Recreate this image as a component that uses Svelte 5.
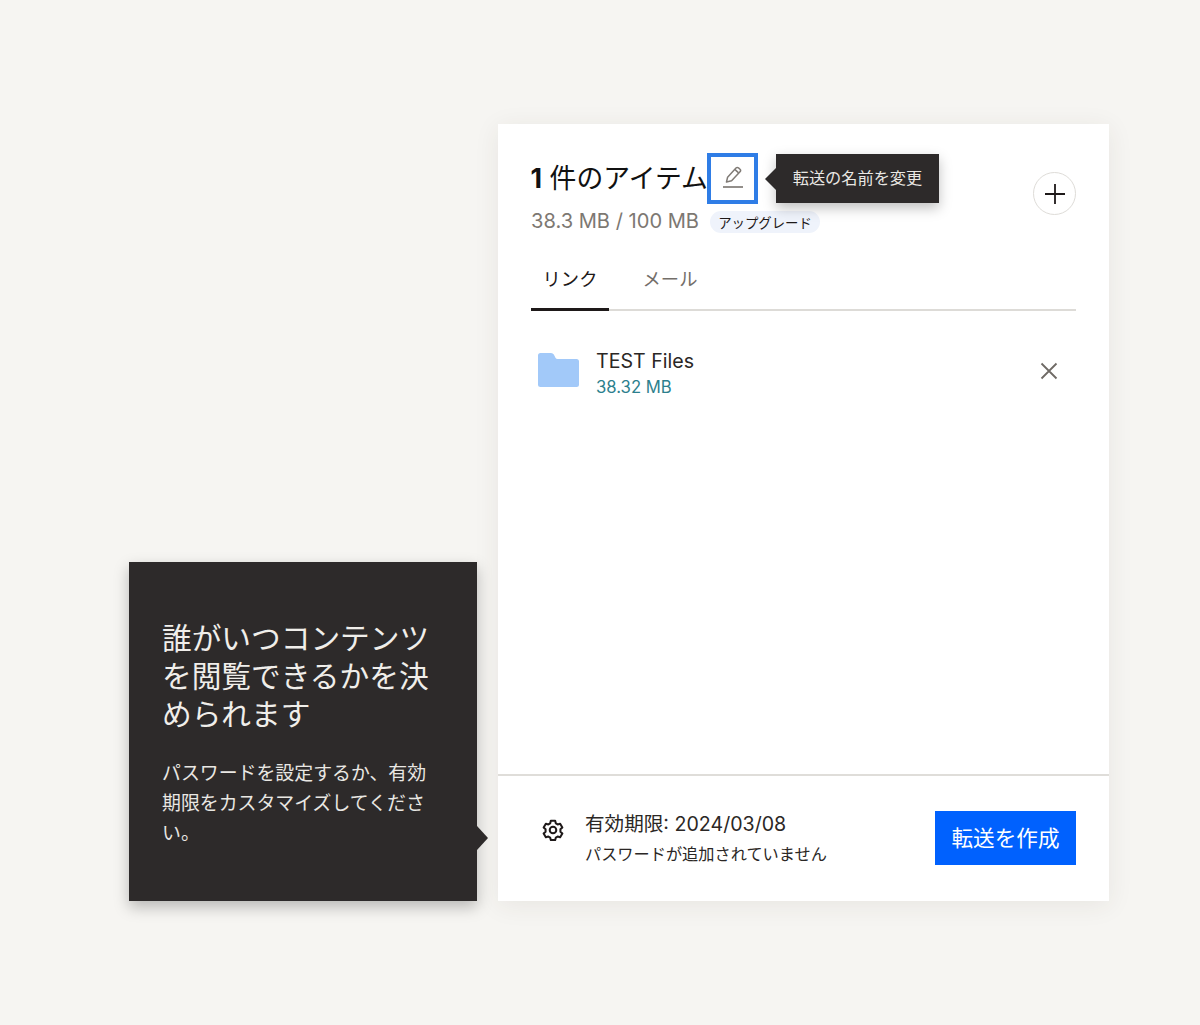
<script>
  const tabs = [
    { label: 'リンク', active: true },
    { label: 'メール', active: false }
  ];
</script>

<div class="stage">
  <aside class="coach">
    <h2>誰がいつコンテンツを閲覧できるかを決められます</h2>
    <p>パスワードを設定するか、有効期限をカスタマイズしてください。</p>
  </aside>

  <section class="card">
    <header class="head">
      <div class="head-main">
        <div class="title-row">
          <h1><b>1</b> 件のアイテム</h1>
          <button class="edit" aria-label="転送の名前を変更">
            <svg width="22" height="24" viewBox="0 0 22 24" fill="none" stroke="#807b76" stroke-width="1.5">
              <path d="M4.5 16 L5.6 11.2 L14 2 Q15.2 .9 16.5 1.9 L18 3.2 Q19.2 4.4 18 5.7 L9.6 14.8 Z" stroke-linejoin="round" />
              <path d="M12.8 3.4 L16.6 6.9" />
              <path d="M1 21 H21" stroke-width="1.7" />
            </svg>
          </button>
          <div class="tip">転送の名前を変更</div>
        </div>
        <div class="quota">
          <span>38.3 MB / 100 MB</span>
          <span class="badge">アップグレード</span>
        </div>
      </div>
      <button class="add" aria-label="追加">
        <svg width="22" height="22" viewBox="0 0 22 22" stroke="#1e1919" stroke-width="1.8"><path d="M11 1 V21 M1 11 H21" /></svg>
      </button>
    </header>

    <nav class="tabs">
      {#each tabs as t}
        <span class="tab" class:active={t.active}>{t.label}</span>
      {/each}
    </nav>

    <div class="file">
      <svg class="folder" width="41" height="34" viewBox="0 0 41 34">
        <path d="M0 2.5 Q0 0 2.5 0 H13 Q15 0 15.8 1.5 L17.6 5 Q18.2 6 19.6 6 H38.5 Q41 6 41 8.5 V31.5 Q41 34 38.5 34 H2.5 Q0 34 0 31.5 Z" fill="#a2c9f9" />
      </svg>
      <div class="file-text">
        <div class="file-name">TEST Files</div>
        <div class="file-size">38.32 MB</div>
      </div>
      <svg class="remove" width="18" height="18" viewBox="0 0 18 18" stroke="#6f6a65" stroke-width="1.8"><path d="M1.5 1.5 L16.5 16.5 M16.5 1.5 L1.5 16.5" /></svg>
    </div>

    <footer class="foot">
      <svg class="gear" width="22" height="22" viewBox="0 0 24 24" fill="none" stroke="#1e1919" stroke-width="2.2" stroke-linejoin="round">
        <path d="M9.6 2.5h4.8l.7 2.8 1.9 1.1 2.8-.8 2.4 4.1-2.1 2v2.6l2.1 2-2.4 4.1-2.8-.8-1.9 1.1-.7 2.8H9.6l-.7-2.8-1.9-1.1-2.8.8-2.4-4.1 2.1-2v-2.6l-2.1-2 2.4-4.1 2.8.8 1.9-1.1z" transform="translate(0 -.5)" />
        <circle cx="12" cy="12" r="3.6" />
      </svg>
      <div class="foot-text">
        <div class="expiry">有効期限: 2024/03/08</div>
        <div class="pass">パスワードが追加されていません</div>
      </div>
      <button class="create">転送を作成</button>
    </footer>
  </section>
</div>

<style>
  :global(body) {
    margin: 0;
    background: #f6f5f2;
  }
  .stage {
    height: 1025px;
    box-sizing: border-box;
    padding: 124px 0 0 129px;
    display: flex;
    align-items: flex-start;
    gap: 21px;
    font-family: Inter, "Noto Sans CJK JP", sans-serif;
    color: #1e1919;
  }
  h1, h2, p { margin: 0; font-weight: 400; }
  button { font-family: inherit; padding: 0; cursor: pointer; }

  .coach {
    position: relative;
    margin-top: 438px;
    width: 348px;
    height: 339px;
    box-sizing: border-box;
    padding: 57px 33px 0;
    background: #2d2a2a;
    color: #f0eeea;
    box-shadow: 0 6px 14px rgba(0, 0, 0, 0.25);
  }
  .coach::after {
    content: "";
    position: absolute;
    right: -11px;
    top: 264px;
    width: 11px;
    height: 24px;
    background: #2d2a2a;
    clip-path: polygon(0 0, 100% 50%, 0 100%);
  }
  .coach h2 {
    font-size: 29.7px;
    line-height: 38px;
    font-weight: 400;
  }
  .coach p {
    margin-top: 26px;
    font-size: 18.9px;
    line-height: 30px;
    font-weight: 400;
    color: #e9e7e3;
  }

  .card {
    width: 611px;
    height: 777px;
    background: #fff;
    display: flex;
    flex-direction: column;
    box-sizing: border-box;
    padding: 0 33px;
    box-shadow: 0 4px 24px rgba(60, 50, 40, 0.08);
  }
  .head {
    display: flex;
    justify-content: space-between;
    padding-top: 29px;
    height: 126px;
    box-sizing: border-box;
  }
  .title-row {
    position: relative;
    display: flex;
    align-items: center;
    height: 50px;
  }
  h1 {
    font-size: 26.8px;
    white-space: nowrap;
    color: #111;
    width: 176px;
    padding-bottom: 4px;
    margin-left: -0.5px;
    margin-right: 0.5px;
  }
  h1 b { font-weight: 700; }
  .edit {
    width: 51px;
    height: 51px;
    box-sizing: border-box;
    border: 4px solid #2f7de6;
    background: #fff;
    display: grid;
    place-items: center;
  }
  .tip {
    position: absolute;
    left: 245px;
    top: 1px;
    width: 163px;
    height: 49px;
    padding-bottom: 3px;
    box-sizing: border-box;
    background: #2d2a2a;
    color: #e9e7e3;
    font-size: 16.2px;
    font-weight: 400;
    display: grid;
    place-items: center;
    white-space: nowrap;
    box-shadow: 0 5px 12px rgba(0, 0, 0, 0.25);
  }
  .tip::before {
    content: "";
    position: absolute;
    left: -11px;
    top: 14px;
    width: 11px;
    height: 22px;
    background: #2d2a2a;
    clip-path: polygon(100% 0, 0 50%, 100% 100%);
  }
  .quota {
    display: flex;
    align-items: center;
    gap: 11px;
    margin-top: 5px;
    color: #7d7872;
    font-size: 20.1px;
    height: 26px;
  }
  .badge {
    height: 22px;
    width: 110px;
    border-radius: 11px;
    background: #eff3fb;
    color: #1e1919;
    font-size: 13.4px;
    font-weight: 400;
    display: grid;
    place-items: center;
    white-space: nowrap;
    margin-top: 1px;
  }
  .add {
    margin-top: 19px;
    width: 43px;
    height: 43px;
    border-radius: 50%;
    border: 1.5px solid #dedcd8;
    background: #fff;
    display: grid;
    place-items: center;
  }

  .tabs {
    display: flex;
    height: 61px;
    border-bottom: 2px solid #dddbd7;
    box-sizing: border-box;
  }
  .tab {
    width: 78px;
    margin-right: 22px;
    box-sizing: border-box;
    padding-top: 15px;
    font-size: 18.3px;
    line-height: 28px;
    text-align: center;
    font-weight: 400;
    color: #736e69;
    margin-bottom: -2px;
  }
  .tab.active {
    color: #1e1919;
    border-bottom: 3px solid #1e1919;
  }

  .file {
    display: flex;
    align-items: center;
    padding: 29px 18px 0 7px;
  }
  .folder { flex: none; }
  .file-text {
    flex: 1;
    margin-left: 17px;
    margin-top: 8px;
  }
  .file-name { font-size: 19.6px; line-height: 26px; color: #2b2725; }
  .file-size { font-size: 16.7px; line-height: 26px; color: #2c7f8d; }
  .remove { flex: none; margin-top: 2px; }

  .foot {
    margin: auto -33px 0;
    padding: 0 33px 0 43.5px;
    height: 127px;
    box-sizing: border-box;
    border-top: 2px solid #dfddd9;
    display: flex;
    align-items: center;
  }
  .gear { flex: none; margin-top: -17px; }
  .foot-text { flex: 1; margin-left: 21.5px; }
  .expiry { font-size: 19.6px; line-height: 30px; color: #2b2725; }
  .pass { font-size: 16.2px; line-height: 30px; font-weight: 400; color: #2b2725; }
  .create {
    width: 141px;
    height: 54px;
    margin-top: -1px;
    border: 0;
    padding-bottom: 3px;
    background: #0061fe;
    color: #fff;
    font-size: 21.6px;
    font-weight: 400;
  }
</style>
